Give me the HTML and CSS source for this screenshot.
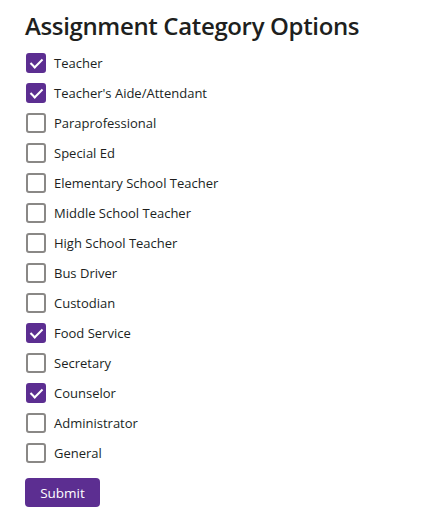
FILE: index.html
```html
<!DOCTYPE html>
<html>
<head>
<meta charset="utf-8">
<link rel="stylesheet" href="styles.css">
</head>
<body>
<main class="page">
  <h1 class="title">Assignment Category Options</h1>
  <form class="options">
    <label class="option"><input type="checkbox" class="box" checked><span>Teacher</span></label>
    <label class="option"><input type="checkbox" class="box" checked><span>Teacher's Aide/Attendant</span></label>
    <label class="option"><input type="checkbox" class="box"><span>Paraprofessional</span></label>
    <label class="option"><input type="checkbox" class="box"><span>Special Ed</span></label>
    <label class="option"><input type="checkbox" class="box"><span>Elementary School Teacher</span></label>
    <label class="option"><input type="checkbox" class="box"><span>Middle School Teacher</span></label>
    <label class="option"><input type="checkbox" class="box"><span>High School Teacher</span></label>
    <label class="option"><input type="checkbox" class="box"><span>Bus Driver</span></label>
    <label class="option"><input type="checkbox" class="box"><span>Custodian</span></label>
    <label class="option"><input type="checkbox" class="box" checked><span>Food Service</span></label>
    <label class="option"><input type="checkbox" class="box"><span>Secretary</span></label>
    <label class="option"><input type="checkbox" class="box" checked><span>Counselor</span></label>
    <label class="option"><input type="checkbox" class="box"><span>Administrator</span></label>
    <label class="option"><input type="checkbox" class="box"><span>General</span></label>
    <button type="button" class="submit">Submit</button>
  </form>
</main>
</body>
</html>
```
FILE: styles.css
```css
html, body {
  margin: 0;
  padding: 0;
  background: #ffffff;
}
body {
  font-family: "Open Sans", "Noto Sans", sans-serif;
  color: #201f1e;
}
.page {
  padding: 10px 25px 0 25px;
}
.title {
  margin: 0 0 6px 0;
  font-size: 24px;
  font-weight: 600;
  line-height: 32px;
  color: #201f1e;
  letter-spacing: -0.35px;
}
.options {
  display: flex;
  flex-direction: column;
  align-items: flex-start;
}
.option {
  display: flex;
  align-items: center;
  gap: 8px;
  height: 30px;
  font-size: 13px;
  color: #201f1e;
}
.box {
  appearance: none;
  -webkit-appearance: none;
  margin: 0 0 0 1px;
  width: 20px;
  height: 20px;
  box-sizing: border-box;
  border: 2px solid #8a8886;
  border-radius: 3px;
  background: #fff;
  position: relative;
}
.box:checked {
  border-color: #5c2e91;
  background: #5c2e91;
}
.box:checked::after {
  content: "";
  position: absolute;
  left: 5px;
  top: 1px;
  width: 5px;
  height: 10px;
  border: solid #fff;
  border-width: 0 2px 2px 0;
  transform: rotate(45deg);
}
.submit {
  margin-top: 10px;
  width: 75px;
  height: 29px;
  border: none;
  border-radius: 4px;
  background: #5c2e91;
  color: #fff;
  font-family: "Open Sans", "Noto Sans", sans-serif;
  font-size: 13.5px;
  padding: 0;
}
```
